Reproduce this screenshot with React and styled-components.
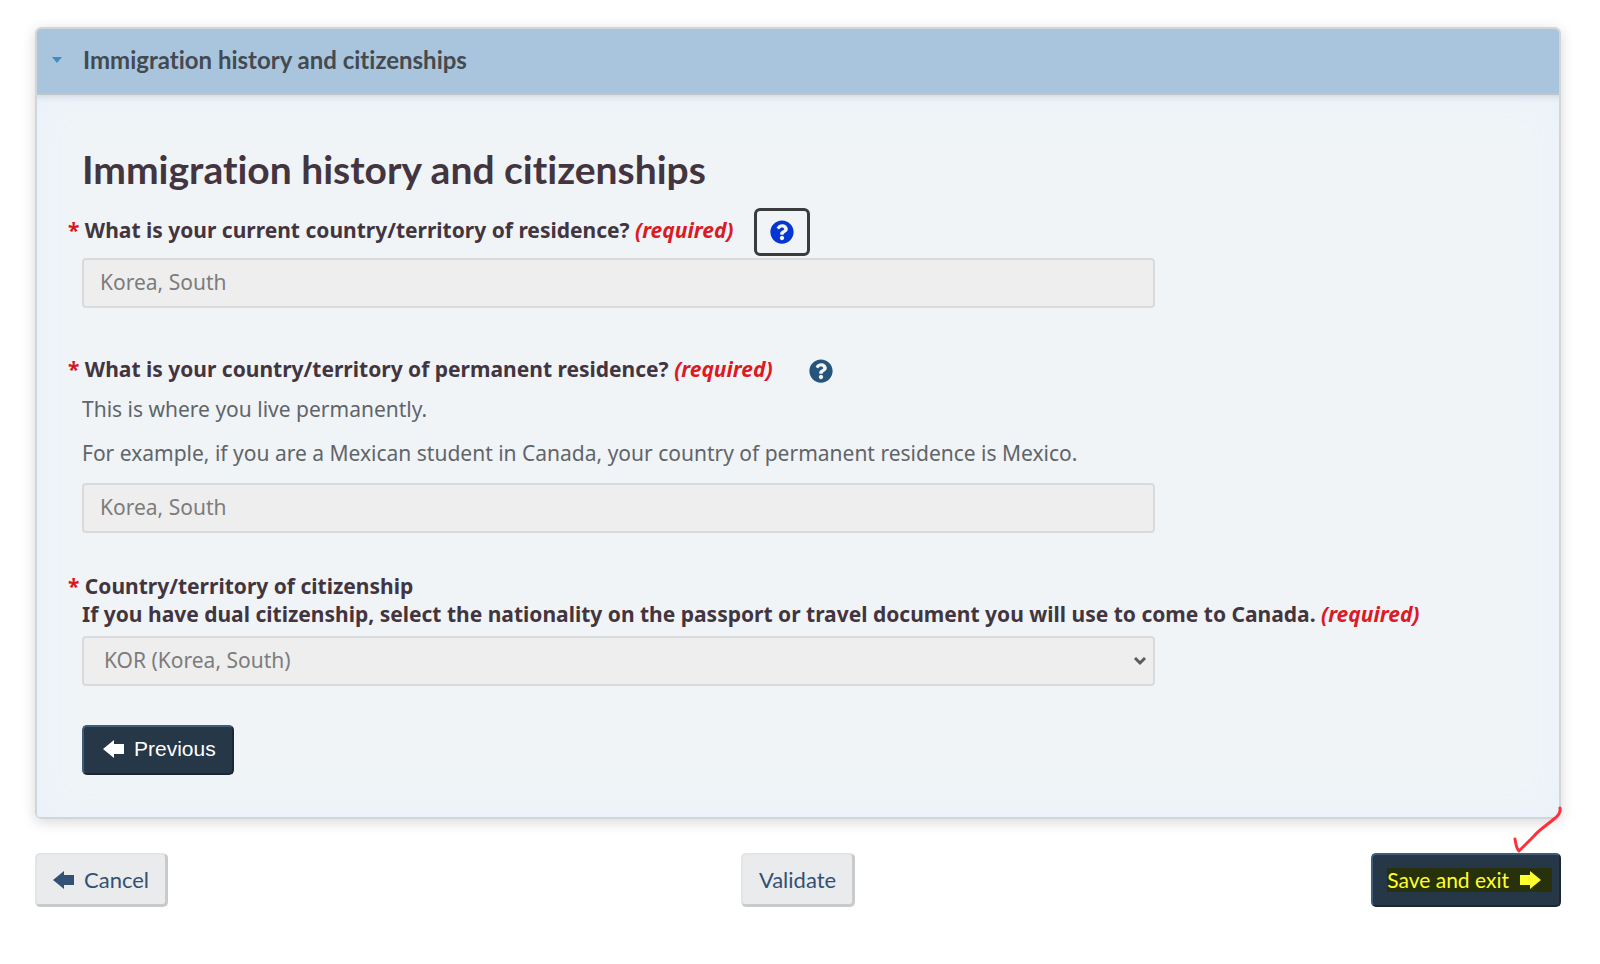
import { useState } from 'react';
import styled, { createGlobalStyle } from 'styled-components';
import { FaQuestionCircle } from 'react-icons/fa';

const GlobalStyle = createGlobalStyle`
  *,
  *::before,
  *::after {
    box-sizing: border-box;
  }

  body {
    margin: 0;
    background: #fff;
    color: #43353f;
    font-family: 'Noto Sans', sans-serif;
    font-size: 21px;
    font-variant-ligatures: none;
    line-height: 28px;
  }
`;

function ArrowIcon({ flipped }) {
  return (
    <Arrow viewBox="0 0 22 20" $flipped={flipped} aria-hidden="true">
      <path d="M0 10 11 1v4h10v10H11v4z" />
    </Arrow>
  );
}

function HelpButton({ focused, label }) {
  return (
    <Help type="button" $focused={focused} aria-label={label}>
      <FaQuestionCircle />
    </Help>
  );
}

function App() {
  const [country, setCountry] = useState('KOR');

  return (
    <Page>
      <GlobalStyle />
      <Panel open>
        <PanelHeader>
          <Caret viewBox="0 0 10 6" aria-hidden="true">
            <path d="M0 0h10L5 6z" />
          </Caret>
          Immigration history and citizenships
        </PanelHeader>
        <PanelBody>
          <Title>Immigration history and citizenships</Title>

          <Field>
            <LabelRow>
              <Label htmlFor="current-residence">
                What is your current country/territory of residence?{' '}
                <Required>(required)</Required>
              </Label>
              <HelpButton focused label="Help with current residence" />
            </LabelRow>
            <TextInput id="current-residence" defaultValue="Korea, South" disabled />
          </Field>

          <Field>
            <LabelRow $gap={0}>
              <Label htmlFor="permanent-residence">
                What is your country/territory of permanent residence?{' '}
                <Required>(required)</Required>
              </Label>
              <HelpButton label="Help with permanent residence" />
            </LabelRow>
            <Hint>This is where you live permanently.</Hint>
            <Hint>
              For example, if you are a Mexican student in Canada, your country of
              permanent residence is Mexico.
            </Hint>
            <TextInput id="permanent-residence" defaultValue="Korea, South" disabled />
          </Field>

          <Field>
            <LabelRow $gap={8}>
              <Label htmlFor="citizenship" $flush>
                Country/territory of citizenship
                <br />
                If you have dual citizenship, select the nationality on the passport or
                travel document you will use to come to Canada.{' '}
                <Required>(required)</Required>
              </Label>
            </LabelRow>
            <SelectWrap>
              <Select
                id="citizenship"
                value={country}
                onChange={(e) => setCountry(e.target.value)}
                disabled
              >
                <option value="KOR">KOR (Korea, South)</option>
              </Select>
              <Chevron viewBox="0 0 14 10" aria-hidden="true">
                <path d="M2 2l5 5 5-5" />
              </Chevron>
            </SelectWrap>
          </Field>

          <PreviousButton type="button">
            <ArrowIcon />
            Previous
          </PreviousButton>
        </PanelBody>
      </Panel>

      <Actions>
        <LightButton type="button">
          <ArrowIcon />
          Cancel
        </LightButton>
        <LightButton type="button">Validate</LightButton>
        <SaveWrap>
          <SaveButton type="button">
            <Highlight>
              Save and exit
              <ArrowIcon flipped />
            </Highlight>
          </SaveButton>
          <CheckMark viewBox="0 0 50 50" aria-hidden="true">
            <path d="M47 3c1 5-2 8-6 11C34 20 27 24 21 31L6 46C3 43 3 39 2 34" />
          </CheckMark>
        </SaveWrap>
      </Actions>
    </Page>
  );
}

const Page = styled.main`
  padding: 27px 39px 40px 35px;
`;

const Panel = styled.details`
  border: 2px solid #d3d6d8;
  border-radius: 6px;
  box-shadow: 0 3px 14px rgba(0, 0, 0, 0.16);
`;

const PanelHeader = styled.summary`
  display: flex;
  align-items: center;
  gap: 21px;
  padding: 17px 16px 19px 15px;
  border-bottom: 2px solid #bfc5c9;
  border-radius: 4px 4px 0 0;
  background: #a9c5de;
  color: #434a50;
  font-family: Lato, sans-serif;
  font-size: 24px;
  font-weight: 700;
  cursor: pointer;
`;

const Caret = styled.svg`
  width: 10px;
  height: 6px;
  fill: #3f8dc4;
`;

const PanelBody = styled.div`
  padding: 52px 46px 42px 45px;
  border-radius: 0 0 4px 4px;
  background: #f0f4f7;
  box-shadow:
    inset 0 8px 8px -8px rgba(0, 0, 0, 0.16),
    inset 0 0 44px #e8f1fc;
`;

const Title = styled.h2`
  margin: 0 0 17px;
  font-family: Lato, sans-serif;
  font-size: 39px;
  font-weight: 700;
  line-height: 44px;
`;

const Field = styled.div`
  margin-bottom: 39px;
`;

const LabelRow = styled.div`
  display: flex;
  align-items: flex-start;
  gap: 20px;
  margin-bottom: ${({ $gap = 2 }) => $gap}px;
`;

const Label = styled.label`
  padding-top: ${({ $flush }) => ($flush ? 0 : '8px')};
  font-weight: 700;

  &::before {
    content: '* ';
    margin-left: -14px;
    color: #d8151b;
  }
`;

const Required = styled.em`
  color: #dc1a24;
`;

const Help = styled.button`
  flex: none;
  display: flex;
  padding: 9px 13px;
  border: 3px solid ${({ $focused }) => ($focused ? '#3a3b3d' : 'transparent')};
  border-radius: 6px;
  background: none;
  color: ${({ $focused }) => ($focused ? '#0535d2' : '#26547b')};
  font-size: 24px;
  cursor: pointer;
`;

const Hint = styled.p`
  margin: 0 0 16px;
  color: #606569;
`;

const controlStyles = `
  height: 50px;
  border: 2px solid #d9dadb;
  border-radius: 4px;
  background: #eeeeee;
  color: #7c7c7c;
  font: inherit;
  opacity: 1;
`;

const TextInput = styled.input`
  ${controlStyles}
  display: block;
  width: 75%;
  padding: 0 16px 3px;
`;

const SelectWrap = styled.div`
  display: grid;
  align-items: center;
  width: 75%;
`;

const Select = styled.select`
  ${controlStyles}
  grid-area: 1 / 1;
  width: 100%;
  padding: 0 20px 2px;
  appearance: none;
`;

const Chevron = styled.svg`
  grid-area: 1 / 1;
  justify-self: end;
  width: 14px;
  height: 10px;
  margin-right: 8px;
  fill: none;
  stroke: #5b5b5b;
  stroke-width: 3;
  pointer-events: none;
`;

const Arrow = styled.svg`
  width: 22px;
  height: 20px;
  fill: currentColor;
  transform: ${({ $flipped }) => ($flipped ? 'scaleX(-1)' : 'none')};
`;

const Button = styled.button`
  display: inline-flex;
  align-items: center;
  gap: 9px;
  border-radius: 5px;
  font-family: Lato, sans-serif;
  font-size: 21px;
  line-height: 28px;
  cursor: pointer;
`;

const DarkButton = styled(Button)`
  border: 2px solid;
  border-color: #3d5d7b #1b2733 #1b2733 #3d5d7b;
  background: #263748;
  color: #fff;
`;

const PreviousButton = styled(DarkButton)`
  height: 50px;
  padding: 0 16px 2px 19px;
  font-family: 'Liberation Sans', sans-serif;
`;

const LightButton = styled(Button)`
  height: 54px;
  padding: 0 16px;
  border: 2px solid;
  border-width: 2px 3px 3px 2px;
  border-color: #e2e4e5 #c8cacc #c8cacc #e2e4e5;
  background: #e9ebed;
  color: #335075;
  font-size: 22px;
`;

const Actions = styled.div`
  display: grid;
  grid-template-columns: 1fr auto 1fr;
  justify-items: start;
  margin-top: 34px;
`;

const SaveWrap = styled.div`
  position: relative;
  justify-self: end;
`;

const SaveButton = styled(DarkButton)`
  height: 54px;
  padding: 0 7px 0 14px;
`;

const Highlight = styled.span`
  display: flex;
  align-items: center;
  gap: 10px;
  padding-right: 11px;
  background: #27320c;
  color: #ffff2e;
  line-height: 24px;
`;

/* hand-drawn tick above the save button */
const CheckMark = styled.svg`
  position: absolute;
  right: -2px;
  bottom: 52px;
  width: 50px;
  height: 50px;
  fill: none;
  stroke: #ff3038;
  stroke-width: 3;
  stroke-linecap: round;
  stroke-linejoin: round;
  pointer-events: none;
`;

export default App;
